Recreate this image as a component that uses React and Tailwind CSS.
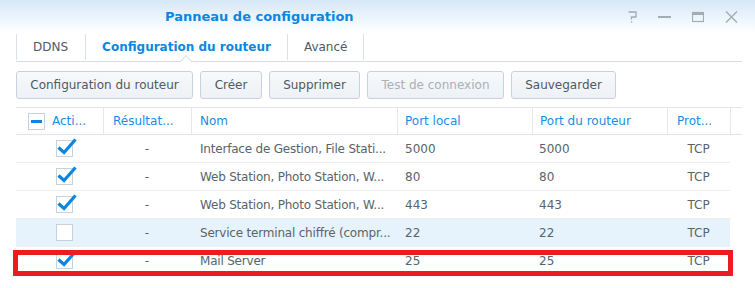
import React from "react";

const rows = [
    { on: true, name: "Interface de Gestion, File Stati...", local: "5000", router: "5000" },
    { on: true, name: "Web Station, Photo Station, W...", local: "80", router: "80" },
    { on: true, name: "Web Station, Photo Station, W...", local: "443", router: "443" },
    { on: false, name: "Service terminal chiffré (compr...", local: "22", router: "22", selected: true },
    { on: true, name: "Mail Server", local: "25", router: "25" },
];

const buttons = [
    { label: "Configuration du routeur", w: "w-[177px]" },
    { label: "Créer", w: "w-[62px]" },
    { label: "Supprimer", w: "w-[91px]" },
    { label: "Test de connexion", w: "w-[137px]", disabled: true },
    { label: "Sauvegarder", w: "w-[105px]" },
];

function Check({ on }) {
    return (
        <div className="relative h-[17px] w-[17px] border border-[#c6d1dc] bg-white">
            {on && (
                <svg
                    className="absolute -left-[1px] -top-[5px]"
                    width="22"
                    height="20"
                    viewBox="0 0 22 20"
                >
                    <path
                        d="M2.5 11.5 L8 16.5 L19.5 3.5"
                        fill="none"
                        stroke="#0a86e2"
                        strokeWidth="3.2"
                        strokeLinejoin="miter"
                    />
                </svg>
            )}
        </div>
    );
}

function WindowControls() {
    return (
        <div className="flex items-center gap-[21px] pr-[20px] text-[#a3abb3]">
            <svg width="9" height="12" viewBox="0 0 9 12">
                <path d="M0.5 1 H8 V6 H3.5 V8.5" fill="none" stroke="currentColor" strokeWidth="1.3" />
                <rect x="2.8" y="10.2" width="1.4" height="1.4" fill="currentColor" />
            </svg>
            <svg width="13" height="12" viewBox="0 0 13 12">
                <rect x="0" y="5" width="13" height="2" fill="currentColor" />
            </svg>
            <svg width="12" height="12" viewBox="0 0 12 12">
                <rect x="0.5" y="1.5" width="11" height="9" fill="none" stroke="currentColor" strokeWidth="1.2" />
                <rect x="0.5" y="1.5" width="11" height="2.5" fill="currentColor" />
            </svg>
            <svg width="13" height="12" viewBox="0 0 13 12">
                <path d="M1 0.5 L12 11.5 M12 0.5 L1 11.5" stroke="currentColor" strokeWidth="1.4" />
            </svg>
        </div>
    );
}

export default function App() {
    return (
        <div className="relative flex h-[288px] w-[755px] overflow-hidden bg-white font-['DejaVu_Sans',sans-serif]">
            <div className="flex flex-1 flex-col">
                {/* title bar */}
                <div className="flex h-[33px] items-center justify-between bg-gradient-to-b from-[#d6e8f8] to-white">
                    <div className="pl-[165px] pt-[1px] text-[13px] font-bold text-[#0b87e2]">
                        Panneau de configuration
                    </div>
                    <WindowControls />
                </div>

                {/* tabs */}
                <div className="relative mx-[16px] flex h-[29px] w-[726px] border-b border-[#d6dce2] text-[12px]">
                    <div className="my-[1px] flex items-center border-l border-[#d9e0e7] pl-[16px] pr-[17px] text-[#505a64]">
                        DDNS
                    </div>
                    <div className="relative my-[1px] flex items-center border-l border-[#d9e0e7] px-[16px] text-[12px] font-bold text-[#0b87e2]">
                        Configuration du routeur
                        <div className="absolute -bottom-[6px] left-1/2 h-[9px] w-[9px] -translate-x-1/2 rotate-45 border-l border-t border-[#d6dce2] bg-white" />
                    </div>
                    <div className="my-[1px] flex items-center border-x border-[#d9e0e7] px-[16px] text-[#505a64]">
                        Avancé
                    </div>
                </div>

                {/* toolbar */}
                <div className="mt-[9px] flex gap-[7px] pl-[16px]">
                    {buttons.map((b) => (
                        <div
                            key={b.label}
                            className={`${b.w} flex h-[28px] items-center justify-center rounded-[3px] border border-[#c9d2dc] bg-gradient-to-b from-[#f7f9fb] to-[#edf1f5] text-[12px] ${b.disabled ? "text-[#a9b0b7]" : "text-[#4f5962]"}`}
                        >
                            {b.label}
                        </div>
                    ))}
                </div>

                {/* table */}
                <div className="ml-[16px] mt-[8px] w-[726px] text-[12px]">
                    <div className="flex h-[28px] border-y border-[#dfe5eb] text-[#1a8de3]">
                        <div className="flex w-[87px] items-center gap-[7px] pl-[12px]">
                            <div className="flex h-[17px] w-[17px] items-center justify-center border border-[#c6d1dc] bg-white">
                                <div className="h-[3px] w-[11px] bg-[#0a86e2]" />
                            </div>
                            Acti...
                        </div>
                        <div className="flex w-[88px] items-center border-l border-[#e3e8ed] pl-[9px]">Résultat...</div>
                        <div className="flex w-[206px] items-center border-l border-[#e3e8ed] pl-[8px]">Nom</div>
                        <div className="flex w-[135px] items-center border-l border-[#e3e8ed] pl-[7px]">Port local</div>
                        <div className="flex w-[135px] items-center border-l border-[#e3e8ed] pl-[7px]">Port du routeur</div>
                        <div className="flex w-[63px] items-center border-l border-[#e3e8ed] pl-[9px]">Prot...</div>
                        <div className="w-[12px] border-l border-[#e3e8ed]" />
                    </div>

                    {rows.map((r, i) => (
                        <div
                            key={i}
                            className={`flex h-[28px] w-[714px] items-center border-b border-[#eceff2] text-[#5a636b] ${r.selected ? "bg-[#e6f3fd]" : ""}`}
                        >
                            <div className="flex w-[87px] justify-center pl-[9px]">
                                <Check on={r.on} />
                            </div>
                            <div className="w-[88px] text-center">-</div>
                            <div className="w-[206px] whitespace-nowrap pl-[9px] tracking-[-0.2px]">{r.name}</div>
                            <div className="w-[135px] pl-[8px]">{r.local}</div>
                            <div className="w-[135px] pl-[7px]">{r.router}</div>
                            <div className="w-[63px] text-center">TCP</div>
                        </div>
                    ))}
                </div>
            </div>

            <div className="w-[2px] bg-gradient-to-b from-[#2c659b] via-[#2c659b] via-45% to-[#9aa5ae]" />

            {/* highlight around the last row */}
            <div className="absolute left-[13px] top-[250px] h-[26px] w-[720px] border-[5px] border-[#ec1c24]" />
        </div>
    );
}
